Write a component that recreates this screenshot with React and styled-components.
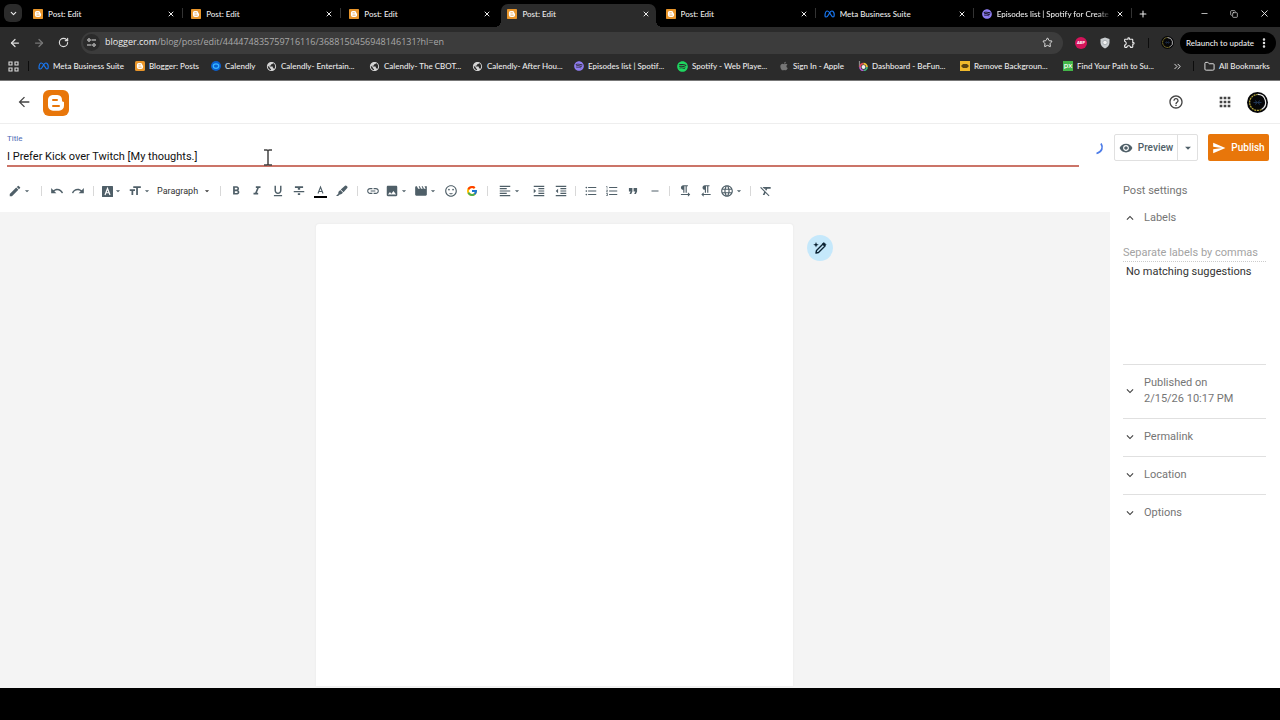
import React from "react";
import styled, { createGlobalStyle, css } from "styled-components";
import {
  MdEdit, MdUndo, MdRedo, MdFormatBold, MdFormatItalic, MdFormatUnderlined, MdLink, MdImage,
  MdMovie, MdSentimentSatisfied, MdFormatAlignLeft, MdFormatListBulleted, MdFormatListNumbered,
  MdFormatQuote, MdRemove, MdFormatTextdirectionLToR, MdFormatTextdirectionRToL, MdLanguage,
  MdFormatClear, MdArrowDropDown, MdFormatSize, MdVisibility, MdSend, MdHelpOutline, MdApps,
  MdExpandLess, MdExpandMore, MdPublic, MdArrowBack, MdFormatStrikethrough, MdFormatIndentIncrease,
  MdFormatIndentDecrease, MdOutlineExtension,
} from "react-icons/md";
import { FcGoogle } from "react-icons/fc";
import { FaApple, FaSpotify } from "react-icons/fa";
import {
  ArrowLeft, ArrowRight, RotateCw, X, Plus, Minus, ChevronDown, ChevronsRight, Star, Folder,
  Copy, EllipsisVertical,
} from "lucide-react";

const Global = createGlobalStyle`
  *, *::before, *::after { box-sizing: border-box; }
  body { margin: 0; background: #000; font-family: Roboto, "Liberation Sans", sans-serif; }
  button, input { font: inherit; color: inherit; border: 0; padding: 0; margin: 0; background: none; outline: none; }
  button { display: flex; align-items: center; justify-content: center; }
  a { color: inherit; text-decoration: none; }
  svg { display: block; flex: none; }
  h1, h2, p { margin: 0; font: inherit; }
`;

const Window = styled.div`
  display: flex;
  flex-direction: column;
  min-height: 100vh;
`;

const Chrome = styled.header`
  font-family: Lato, "Open Sans", sans-serif;
  font-weight: 500;
  color: #ececec;
  background: #2b2b2b;
  border-bottom: 1px solid #777;
`;

const TabStrip = styled.div`
  display: flex;
  height: 27px;
  padding-left: 4px;
  background: #000;
`;

const TabSearch = styled.button`
  width: 18px;
  height: 18px;
  margin: 4px 4px 0 0;
  border-radius: 6px;
  background: #2b2b2b;
`;

const Tabs = styled.nav`
  display: flex;
  flex: 1;
`;

const Tab = styled.div`
  position: relative;
  display: flex;
  align-items: center;
  gap: 5px;
  flex: 1 1 0;
  min-width: 0;
  margin: 4px 3px 0 1px;
  padding: 0 6px 4px;
  font-size: 8px;
  border-radius: 7px 7px 0 0;
  ${(p) => p.$active && css`
    background: #2b2b2b;
    &::before, &::after {
      content: "";
      position: absolute;
      bottom: 0;
      width: 6px;
      height: 6px;
    }
    &::before { left: -6px; background: radial-gradient(circle at 0 0, #000 6px, #2b2b2b 6px); }
    &::after { right: -6px; background: radial-gradient(circle at 100% 0, #000 6px, #2b2b2b 6px); }
  `}
  ${(p) => p.$divider && css`
    &::after {
      content: "";
      position: absolute;
      right: -2px;
      top: 4px;
      width: 1px;
      height: 10px;
      background: #333;
    }
  `}
`;

const TabTitle = styled.a`
  flex: 1;
  min-width: 0;
  overflow: hidden;
  white-space: nowrap;
  ${(p) => p.$fade && css`
    mask-image: linear-gradient(90deg, #000 88%, transparent);
  `}
`;

const WindowControls = styled.div`
  display: flex;
  justify-content: space-between;
  width: 147px;
  padding: 0 10px 0 4px;
  button { width: 12px; }
  button:first-child { margin-right: 31px; }
`;

const AddressRow = styled.div`
  display: flex;
  align-items: center;
  height: 27px;
  padding: 4px 4px 0 9px;
`;

const NavButton = styled.button`
  width: 12px;
  height: 12px;
  margin-right: 12px;
  color: ${(p) => (p.$dim ? "#777" : "#ddd")};
`;

const Omnibox = styled.div`
  display: flex;
  align-items: center;
  flex: 1;
  height: 22px;
  padding: 0 10px 0 2px;
  border-radius: 11px;
  background: #3c3c3c;
`;

const SiteInfo = styled.button`
  width: 17px;
  height: 17px;
  margin-right: 5px;
  border-radius: 50%;
  background: #2b2b2b;
`;

const Url = styled.a`
  flex: 1;
  padding-bottom: 2px;
  font-family: "Open Sans", sans-serif;
  font-weight: 400;
  font-size: 9px;
  color: #a9a9a9;
  span { color: #eee; }
`;

const Extensions = styled.div`
  display: flex;
  align-items: center;
  gap: 12px;
  margin: 0 6px 0 12px;
`;

const Relaunch = styled.button`
  gap: 4px;
  height: 22px;
  width: 96px;
  border-radius: 11px;
  background: #000;
  font-size: 8px;
  white-space: nowrap;
`;

const Bookmarks = styled.nav`
  display: flex;
  align-items: center;
  height: 26px;
  padding: 0 10px 2px 8px;
  font-size: 8px;
`;

const Bookmark = styled.a`
  display: flex;
  align-items: center;
  gap: 4px;
  width: ${(p) => p.$w}px;
  white-space: nowrap;
`;

const ChromeRule = styled.i`
  width: 1px;
  height: 10px;
  background: #0c0c0c;
  margin: ${(p) => p.$m || "0"};
`;

const Spacer = styled.div`
  flex: 1;
`;

const AppBar = styled.header`
  display: flex;
  align-items: center;
  height: 43px;
  padding: 0 12px 0 17px;
  background: #fff;
  border-bottom: 1px solid #eee;
  color: #444;
`;

const LogoLink = styled.a`
  margin: 2px 0 0 12px;
`;

const BarButton = styled.button`
  width: 14px;
  height: 14px;
  margin-right: ${(p) => p.$gap || 0}px;
`;

const Workspace = styled.main`
  display: flex;
  flex: 1;
  background: #fff;
`;

const Editor = styled.section`
  display: flex;
  flex-direction: column;
  flex: 1;
  min-width: 0;
`;

const TitleRow = styled.div`
  display: flex;
  align-items: flex-start;
  justify-content: space-between;
  padding: 10px 6px 0 7px;
`;

const TitleField = styled.label`
  display: flex;
  flex-direction: column;
  flex: 1;
  margin-right: 13px;
  font-size: 8px;
  line-height: 10px;
  color: #4d6bb5;
  input {
    height: 23px;
    padding-top: 4px;
    font-size: 11px;
    color: #111;
    border-bottom: 2px solid #cb7468;
    border-radius: 0;
  }
`;

const SpinnerSlot = styled.div`
  margin-top: 8px;
`;

const Toolbar = styled.div`
  display: flex;
  align-items: center;
  height: 45px;
  padding: 3px 0 0 5px;
  color: #4f5f68;
`;

const Tool = styled.button`
  width: ${(p) => p.$w || 21}px;
  height: 20px;
`;

const ParagraphTool = styled(Tool)`
  justify-content: space-between;
  padding: 0 4px 0 3px;
  font-size: 9px;
  color: #333;
`;

const ToolRule = styled.i`
  width: 1px;
  height: 10px;
  margin: 0 4px 0 ${(p) => p.$l ?? 4}px;
  background: #d8d8d8;
`;

const Canvas = styled.div`
  display: grid;
  grid-template-columns: 1fr 477px 1fr;
  flex: 1;
  padding: 12px 2px 2px 0;
  background: #f4f4f4;
`;

const Page = styled.article`
  grid-column: 2;
  background: #fff;
  border-radius: 3px 3px 0 0;
  box-shadow: 0 0 2px #e2e2e2;
`;

const Assist = styled.button`
  width: 26px;
  height: 26px;
  margin: 11px 0 0 14px;
  border-radius: 50%;
  background: #c5e8fb;
`;

const Sidebar = styled.aside`
  width: 170px;
  padding: 10px 11px 0 4px;
  color: #757575;
  font-size: 11px;
`;

const Actions = styled.div`
  display: flex;
  justify-content: space-between;
  font-size: 10px;
  font-weight: 500;
`;

const PreviewGroup = styled.div`
  display: flex;
  height: 27px;
  border: 1px solid #e0e0e0;
  border-radius: 2px;
  color: #4f5f68;
  button:first-child { width: 62px; gap: 5px; }
  button:last-child { width: 20px; border-left: 1px solid #e0e0e0; border-radius: 0; }
`;

const Publish = styled.button`
  width: 61px;
  height: 27px;
  gap: 5px;
  border-radius: 2px;
  background: #e8760a;
  color: #fff;
`;

const Settings = styled.div`
  padding: 22px 3px 0 9px;
  line-height: 16px;
`;

const SettingHead = styled.button`
  width: 100%;
  justify-content: flex-start;
  gap: 7px;
  text-align: left;
  line-height: 16px;
  svg { color: #444; }
`;

const SettingBlock = styled.section`
  padding: 10px 0 11px;
  border-top: 1px solid #e0e0e0;
`;

const LabelsBlock = styled.section`
  height: 165px;
  padding-top: 11px;
`;

const LabelInput = styled.input`
  width: 100%;
  height: 19px;
  margin-top: 17px;
  border-bottom: 1px dotted #ccc;
  &::placeholder { color: #a3a3a3; opacity: 1; }
`;

const Suggestion = styled.p`
  padding: 2px 3px;
  color: #333;
`;

const BottomBar = styled.footer`
  height: 32px;
  background: #000;
`;

const Pointer = styled.svg`
  position: absolute;
  left: 263px;
  top: 149px;
`;

const BloggerMark = ({ size, fill = "#e8952a", r = 4 }) => (
  <svg width={size} height={size} viewBox="0 0 26 26" aria-hidden="true">
    <rect width="26" height="26" rx={r} fill={fill} />
    <path fill="#fff" d="M9.5 5h5A5 5 0 0 1 19 10c0 1.4.4 1.7 1.3 1.7.5 0 .7.3.7.8v3.3a5 5 0 0 1-5 5H10a5 5 0 0 1-5-5V9.8A4.7 4.7 0 0 1 9.5 5z" />
    <path stroke={fill} strokeWidth="2" strokeLinecap="round" d="M10 10h4M10 16h6" />
  </svg>
);

const MetaMark = () => (
  <svg width="11" height="10" viewBox="0 0 22 20" fill="none" stroke="#1877f2" strokeWidth="2.4" aria-hidden="true">
    <path d="M2 14C2 8 4 4 7 4c5 0 7 12 11 12 2 0 2.5-1.500 2.500-4C20.500 7 18.500 4 15.500 4 11 4 9 16 4.500 16 3 16 2 15.500 2 14z" />
  </svg>
);

const CalendlyMark = () => (
  <svg width="10" height="10" viewBox="0 0 20 20" fill="none" aria-hidden="true">
    <circle cx="10" cy="10" r="10" fill="#0a5fd0" />
    <ellipse cx="10" cy="10" rx="5.500" ry="4.500" stroke="#39b6ff" strokeWidth="2.500" />
  </svg>
);

const BeFunkyMark = () => (
  <svg width="10" height="10" viewBox="0 0 20 20" fill="none" strokeWidth="3.500" aria-hidden="true">
    <path d="M3 0v12" stroke="#8a8a8a" strokeWidth="2.500" />
    <path d="M4 12a7 7 0 0 1 7-7" stroke="#e04a5a" />
    <path d="M11 5a7 7 0 0 1 7 7" stroke="#f2c230" />
    <path d="M18 12a7 7 0 0 1-7 7" stroke="#3fb27f" />
    <path d="M11 19a7 7 0 0 1-7-7" stroke="#b35bd0" />
    <circle cx="11" cy="12" r="4" fill="#eee" />
  </svg>
);

const RemoveBgMark = () => (
  <svg width="10" height="10" viewBox="0 0 20 20" aria-hidden="true">
    <rect width="20" height="20" fill="#f0b92c" />
    <path d="M2 10l4-4h8l4 4-4 4H6z" fill="#5b4312" />
  </svg>
);

const PxBadge = styled.span`
  width: 10px;
  height: 10px;
  background: #43b649;
  color: #fff;
  font-size: 8px;
  line-height: 9px;
  text-align: center;
`;

const AbpBadge = styled.span`
  display: grid;
  place-items: center;
  width: 12px;
  height: 12px;
  border-radius: 50%;
  background: #d4145a;
  color: #fff;
  font-size: 4px;
  font-weight: 900;
`;

const Shield = () => (
  <svg width="12" height="12" viewBox="0 0 24 24" aria-hidden="true">
    <path d="M12 1l9 3v7c0 6-4 10-9 12-5-2-9-6-9-12V4z" fill="#c9cdd0" />
    <circle cx="12" cy="11" r="4.500" fill="#f2f2f2" stroke="#9aa0a4" strokeWidth="1.500" />
  </svg>
);

const Avatar = ({ size }) => (
  <svg width={size} height={size} viewBox="0 0 42 42" fill="none" aria-hidden="true">
    <circle cx="21" cy="21" r="21" fill="#060608" />
    <path d="M21 5a16 16 0 0 1 8 30" stroke="#e8e8e8" strokeWidth="2.500" />
    <path d="M29 35A16 16 0 1 1 21 5" stroke="#b7a93a" strokeWidth="2.500" strokeDasharray="4 1.500" />
    <path d="M13 21h16M16 17l10 8M16 25l10-8" stroke="#1f3350" strokeWidth="2" />
  </svg>
);

const TuneIcon = () => (
  <svg width="11" height="11" viewBox="0 0 22 22" fill="none" stroke="#ddd" strokeWidth="2" aria-hidden="true">
    <circle cx="6" cy="6" r="2.500" />
    <path d="M11 6h9" />
    <circle cx="16" cy="16" r="2.500" />
    <path d="M2 16h9" />
  </svg>
);

const GridIcon = () => (
  <svg width="11" height="11" viewBox="0 0 22 22" fill="none" stroke="#ddd" strokeWidth="2.200" aria-hidden="true">
    <path d="M2 2h6v6H2zM14 2h6v6h-6zM2 14h6v6H2zM14 14h6v6h-6z" />
  </svg>
);

const BoxedA = () => (
  <svg width="11" height="11" viewBox="0 0 22 22" aria-hidden="true">
    <rect width="22" height="22" rx="1" fill="#4f5f68" />
    <path d="M6 18l5-13 5 13M8 13.500h6" fill="none" stroke="#fff" strokeWidth="2.400" />
  </svg>
);

const TextColor = () => (
  <svg width="13" height="13" viewBox="0 0 26 26" fill="none" aria-hidden="true">
    <path d="M8 17l5-13 5 13M9.500 13h7" stroke="#4f5f68" strokeWidth="2.200" />
    <path d="M0 24h26" stroke="#000" strokeWidth="4" />
  </svg>
);

const Highlighter = () => (
  <svg width="12" height="12" viewBox="0 0 24 24" fill="#4f5f68" aria-hidden="true">
    <path d="M18 1.500a2 2 0 0 1 2.800 0L22.500 3a2 2 0 0 1 0 2.800L15 14.500 9.500 9z" />
    <path d="M8.500 10l5.500 5.500-3 2.500c-2 1-3 .5-4.500 2L4 22H0l4.500-4.500c.6-2-.2-3 1-4.500z" />
  </svg>
);

const MagicPen = () => (
  <svg width="14" height="14" viewBox="0 0 28 28" fill="none" stroke="#0b2233" aria-hidden="true">
    <path d="M6 24l1-5L20 6l4 4L11 23z" strokeWidth="2.800" strokeLinejoin="round" />
    <path d="M19 5l3-2 4 4-3 4z" fill="#0b2233" strokeWidth="1" />
    <path d="M6 2l1.500 4 4 1.500-4 1.500L6 13 4.500 9 .5 7.500l4-1.500z" fill="#0b2233" stroke="none" />
  </svg>
);

const Spinner = () => (
  <svg width="12" height="14" viewBox="0 0 24 28" fill="none" aria-hidden="true">
    <path d="M18 3c5 8 2 17-9 20" stroke="#4d7ce8" strokeWidth="3.500" />
  </svg>
);

const Caret = () => <MdArrowDropDown size={10} />;

const tabs = [
  { title: "Post: Edit", divider: true },
  { title: "Post: Edit", divider: true },
  { title: "Post: Edit" },
  { title: "Post: Edit", active: true },
  { title: "Post: Edit", divider: true },
  { title: "Meta Business Suite", icon: <MetaMark />, divider: true },
  { title: "Episodes list | Spotify for Create", icon: <FaSpotify size={10} color="#8e7cf0" />, divider: true, fade: true },
];

const globe = <MdPublic size={11} color="#d5d5d5" />;

const bookmarks = [
  { w: 97, text: "Meta Business Suite", icon: <MetaMark /> },
  { w: 76, text: "Blogger: Posts", icon: <BloggerMark size={10} /> },
  { w: 55, text: "Calendly", icon: <CalendlyMark /> },
  { w: 103, text: "Calendly- Entertain...", icon: globe },
  { w: 103, text: "Calendly- The CBOT...", icon: globe },
  { w: 102, text: "Calendly- After Hou...", icon: globe },
  { w: 103, text: "Episodes list | Spotif...", icon: <FaSpotify size={10} color="#8e7cf0" /> },
  { w: 102, text: "Spotify - Web Playe...", icon: <FaSpotify size={11} color="#1ed760" /> },
  { w: 79, text: "Sign In - Apple", icon: <FaApple size={10} color="#777" /> },
  { w: 102, text: "Dashboard - BeFun...", icon: <BeFunkyMark /> },
  { w: 103, text: "Remove Backgroun...", icon: <RemoveBgMark /> },
  { w: 103, text: "Find Your Path to Su...", icon: <PxBadge>px</PxBadge> },
];

const T = ({ label, icon: Icon, w, caret, size = 14 }) => (
  <Tool $w={w} aria-label={label}>
    <Icon size={size} />
    {caret && <Caret />}
  </Tool>
);

export default function App() {
  return (
    <Window>
      <Global />
      <Chrome>
        <TabStrip>
          <TabSearch aria-label="Search tabs"><ChevronDown size={9} strokeWidth={3} /></TabSearch>
          <Tabs aria-label="Tabs">
            {tabs.map((t, i) => (
              <Tab key={i} $active={t.active} $divider={t.divider}>
                {t.icon || <BloggerMark size={10} r={2} />}
                <TabTitle href="#" $fade={t.fade}>{t.title}</TabTitle>
                <button aria-label="Close tab"><X size={8} strokeWidth={3} /></button>
              </Tab>
            ))}
          </Tabs>
          <WindowControls>
            <button aria-label="New tab"><Plus size={10} strokeWidth={2.5} /></button>
            <button aria-label="Minimize"><Minus size={9} /></button>
            <button aria-label="Restore"><Copy size={8} /></button>
            <button aria-label="Close"><X size={11} /></button>
          </WindowControls>
        </TabStrip>
        <AddressRow>
          <NavButton aria-label="Back"><ArrowLeft size={12} strokeWidth={2.5} /></NavButton>
          <NavButton aria-label="Forward" $dim><ArrowRight size={12} strokeWidth={2.5} /></NavButton>
          <NavButton aria-label="Reload"><RotateCw size={11} strokeWidth={2.5} /></NavButton>
          <Omnibox>
            <SiteInfo aria-label="Site information"><TuneIcon /></SiteInfo>
            <Url href="#"><span>blogger.com</span>/blog/post/edit/444474835759716116/3688150456948146131?hl=en</Url>
            <button aria-label="Bookmark"><Star size={11} /></button>
          </Omnibox>
          <Extensions>
            <AbpBadge>ABP</AbpBadge>
            <Shield />
            <MdOutlineExtension size={13} />
            <ChromeRule />
            <Avatar size={13} />
          </Extensions>
          <Relaunch>Relaunch to update <EllipsisVertical size={12} strokeWidth={3} /></Relaunch>
        </AddressRow>
        <Bookmarks aria-label="Bookmarks">
          <GridIcon />
          <ChromeRule $m="0 9px" />
          {bookmarks.map((b) => (
            <Bookmark key={b.text} href="#" $w={b.w}>{b.icon}{b.text}</Bookmark>
          ))}
          <Spacer />
          <ChevronsRight size={11} />
          <ChromeRule $m="0 10px" />
          <Bookmark href="#" $w={66}><Folder size={11} />All Bookmarks</Bookmark>
        </Bookmarks>
      </Chrome>

      <AppBar>
        <BarButton aria-label="Back"><MdArrowBack size={16} /></BarButton>
        <LogoLink href="#" aria-label="Blogger"><BloggerMark size={26} fill="#e8760a" r={6} /></LogoLink>
        <Spacer />
        <BarButton aria-label="Help" $gap={35}><MdHelpOutline size={16} /></BarButton>
        <BarButton aria-label="Google apps" $gap={15}><MdApps size={16} /></BarButton>
        <button aria-label="Account"><Avatar size={21} /></button>
      </AppBar>

      <Workspace>
        <Editor>
          <TitleRow>
            <TitleField>
              Title
              <input defaultValue="I Prefer Kick over Twitch [My thoughts.]" />
            </TitleField>
            <SpinnerSlot><Spinner /></SpinnerSlot>
          </TitleRow>
          <Toolbar>
            <T label="Edit mode" icon={MdEdit} w={29} caret />
            <ToolRule $l={7} />
            <T label="Undo" icon={MdUndo} w={21} />
            <T label="Redo" icon={MdRedo} w={22} />
            <ToolRule />
            <T label="Font" icon={BoxedA} w={28} caret />
            <T label="Font size" icon={MdFormatSize} w={28} caret />
            <ParagraphTool $w={62}>Paragraph<Caret /></ParagraphTool>
            <ToolRule />
            <T label="Bold" icon={MdFormatBold} />
            <T label="Italic" icon={MdFormatItalic} />
            <T label="Underline" icon={MdFormatUnderlined} />
            <T label="Strikethrough" icon={MdFormatStrikethrough} />
            <T label="Text color" icon={TextColor} w={22} />
            <T label="Highlight" icon={Highlighter} w={22} />
            <ToolRule />
            <T label="Link" icon={MdLink} />
            <T label="Image" icon={MdImage} w={28} caret />
            <T label="Video" icon={MdMovie} w={29} caret />
            <T label="Emoji" icon={MdSentimentSatisfied} w={21} />
            <T label="Search" icon={FcGoogle} size={12} />
            <ToolRule $l={5} />
            <T label="Align" icon={MdFormatAlignLeft} w={36} caret />
            <T label="Indent" icon={MdFormatIndentIncrease} w={22} />
            <T label="Outdent" icon={MdFormatIndentDecrease} w={22} />
            <ToolRule $l={3} />
            <T label="Bulleted list" icon={MdFormatListBulleted} />
            <T label="Numbered list" icon={MdFormatListNumbered} />
            <T label="Quote" icon={MdFormatQuote} w={22} />
            <T label="Rule" icon={MdRemove} size={12} />
            <ToolRule />
            <T label="Left to right" icon={MdFormatTextdirectionLToR} />
            <T label="Right to left" icon={MdFormatTextdirectionRToL} />
            <T label="Language" icon={MdLanguage} w={31} caret />
            <ToolRule $l={3} />
            <T label="Clear formatting" icon={MdFormatClear} />
          </Toolbar>
          <Canvas>
            <Page />
            <Assist aria-label="Writing help"><MagicPen /></Assist>
          </Canvas>
        </Editor>

        <Sidebar>
          <Actions>
            <PreviewGroup>
              <button><MdVisibility size={14} />Preview</button>
              <button aria-label="More preview options"><MdArrowDropDown size={14} /></button>
            </PreviewGroup>
            <Publish><MdSend size={14} />Publish</Publish>
          </Actions>
          <Settings>
            <h2>Post settings</h2>
            <LabelsBlock>
              <SettingHead><MdExpandLess size={14} />Labels</SettingHead>
              <LabelInput aria-label="Labels" placeholder="Separate labels by commas" />
              <Suggestion>No matching suggestions</Suggestion>
            </LabelsBlock>
            <SettingBlock>
              <SettingHead><MdExpandMore size={14} /><span>Published on<br />2/15/26 10:17 PM</span></SettingHead>
            </SettingBlock>
            <SettingBlock><SettingHead><MdExpandMore size={14} />Permalink</SettingHead></SettingBlock>
            <SettingBlock><SettingHead><MdExpandMore size={14} />Location</SettingHead></SettingBlock>
            <SettingBlock><SettingHead><MdExpandMore size={14} />Options</SettingHead></SettingBlock>
          </Settings>
        </Sidebar>
      </Workspace>
      <BottomBar />
      <Pointer width="10" height="17" viewBox="0 0 10 17" fill="none" stroke="#444" strokeWidth="1.500" aria-hidden="true">
        <path d="M1 1h3l1 1 1-1h3M5 2v13M1 16h3l1-1 1 1h3" />
      </Pointer>
    </Window>
  );
}
